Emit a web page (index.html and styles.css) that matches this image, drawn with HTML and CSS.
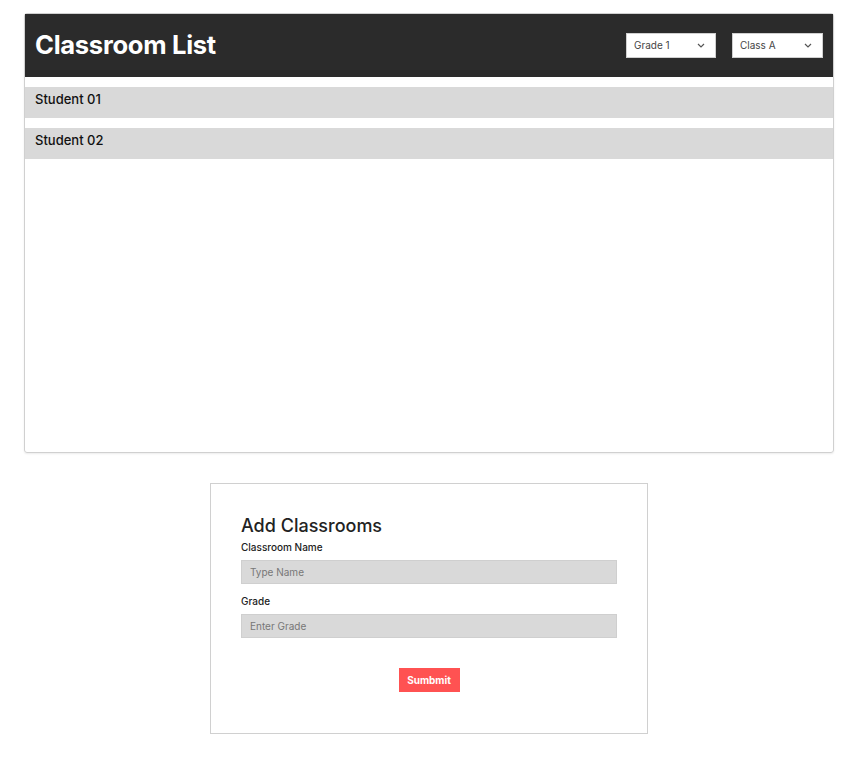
FILE: index.html
```html
<!DOCTYPE html>
<html>
<head>
<meta charset="utf-8">
<link rel="stylesheet" href="styles.css">
</head>
<body>
<div class="list-card">
  <div class="list-header">
    <h1 class="title">Classroom List</h1>
    <div class="filters">
      <div class="select"><span>Grade 1</span><svg class="chev" width="8" height="5" viewBox="0 0 8 5"><path d="M1 1l3 3 3-3" fill="none" stroke="#555" stroke-width="1.2"/></svg></div>
      <div class="select"><span>Class A</span><svg class="chev" width="8" height="5" viewBox="0 0 8 5"><path d="M1 1l3 3 3-3" fill="none" stroke="#555" stroke-width="1.2"/></svg></div>
    </div>
  </div>
  <div class="rows">
    <div class="row">Student 01</div>
    <div class="row">Student 02</div>
  </div>
</div>

<div class="form-card">
  <h2 class="form-title">Add Classrooms</h2>
  <label class="label">Classroom Name</label>
  <div class="input placeholder">Type Name</div>
  <label class="label">Grade</label>
  <div class="input placeholder">Enter Grade</div>
  <div class="actions"><button class="btn">Sumbmit</button></div>
</div>
</body>
</html>
```
FILE: styles.css
```css
* { box-sizing: border-box; }
body {
  margin: 0;
  font-family: Inter, "Noto Sans", sans-serif;
  background: #fff;
  color: #111;
}
.list-card {
  margin: 13px 19px 0 24px;
  height: 440px;
  border: 1px solid #d0d0d0;
  border-radius: 3px;
  box-shadow: 0 1px 2px rgba(0,0,0,0.08);
}
.list-header {
  background: #2b2b2b;
  height: 63px;
  display: flex;
  align-items: center;
  justify-content: space-between;
  padding: 0 10px 0 10px;
}
.title {
  margin: 0 0 3px 0;
  color: #fff;
  font-size: 25.6px;
  font-weight: 700;
  letter-spacing: -0.3px;
}
.filters {
  display: flex;
  gap: 16px;
  margin-bottom: 1px;
}
.select {
  width: 90px;
  height: 25px;
  background: #fff;
  border: 1px solid #d0d0d0;
  display: flex;
  align-items: center;
  justify-content: space-between;
  padding: 0 10px 0 7px;
  font-size: 10px;
  color: #444;
}
.select:last-child { width: 91px; }
.rows {
  display: flex;
  flex-direction: column;
  gap: 10px;
  padding-top: 10px;
}
.row {
  background: #d9d9d9;
  height: 31px;
  display: flex;
  align-items: center;
  padding: 0 10px 8px;
  font-size: 13px;
  font-weight: 500;
  color: #111;
}
.form-card {
  margin: 30px 0 0 210px;
  width: 438px;
  height: 251px;
  border: 1px solid #d0d0d0;
  padding: 31px 30px 0 30px;
}
.form-title {
  margin: 0;
  font-size: 18px;
  font-weight: 500;
  color: #222;
  line-height: 22px;
}
.label {
  display: block;
  font-size: 10px;
  font-weight: 500;
  color: #222;
  margin-top: 4px;
  line-height: 13px;
}
.label + .input { margin-top: 6px; }
.input + .label { margin-top: 11px; }
.input {
  height: 24px;
  background: #d9d9d9;
  border: 1px solid #cfcfcf;
  display: flex;
  align-items: center;
  padding: 0 8px;
  font-size: 10px;
  color: #777;
}
.actions {
  display: flex;
  justify-content: center;
  margin-top: 30px;
}
.btn {
  width: 61px;
  height: 24px;
  background: #ff5252;
  border: none;
  color: #fff;
  font-family: Inter, sans-serif;
  font-size: 10px;
  font-weight: 700;
  padding: 0;
}
```
